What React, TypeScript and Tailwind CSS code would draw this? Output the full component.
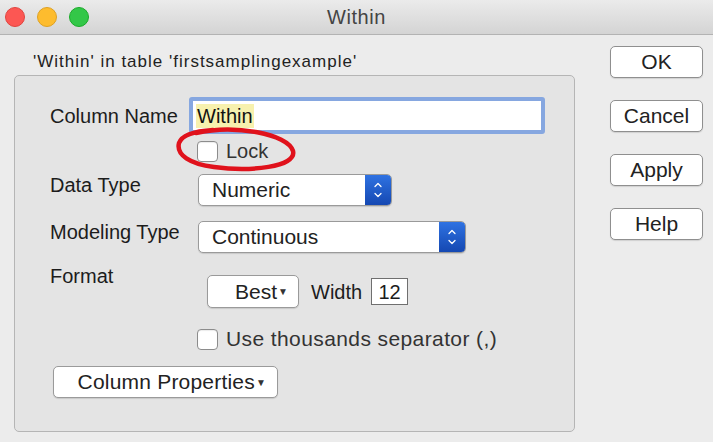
import { ChevronDown, ChevronUp } from "lucide-react";

const font = "font-['Liberation_Sans','Helvetica',sans-serif]";

function Checkbox() {
  return (
    <span className="block h-[21px] w-[21px] shrink-0 rounded-[4px] border border-[#8c8c8c] bg-white shadow-[inset_0_1px_1px_rgba(0,0,0,0.08)]" />
  );
}

type StepperPopupProps = {
  value: string;
  width: string;
};

function StepperPopup({ value, width }: StepperPopupProps) {
  return (
    <div
      className={`flex h-[32px] ${width} overflow-hidden rounded-[5px] border border-[#9a9a9a] bg-white shadow-[0_1px_1px_rgba(0,0,0,0.12)]`}
    >
      <span className="flex flex-1 items-center pl-[13px] text-[21px] text-[#222]">
        {value}
      </span>
      <span className="flex w-[26px] flex-col items-center justify-center bg-gradient-to-b from-[#2f72e2] to-[#1548b2] text-white">
        <ChevronUp size={12} strokeWidth={2.6} className="-mb-[1px]" />
        <ChevronDown size={12} strokeWidth={2.6} className="-mt-[1px]" />
      </span>
    </div>
  );
}

type PushButtonProps = {
  label: string;
};

function PushButton({ label }: PushButtonProps) {
  return (
    <button className="flex h-[32px] w-[93px] items-center justify-center rounded-[5px] border border-[#8f8f8f] bg-white text-[21px] text-[#222] shadow-[0_1px_1px_rgba(0,0,0,0.12)]">
      {label}
    </button>
  );
}

export default function App() {
  return (
    <div className={`relative flex h-[442px] w-[713px] flex-col overflow-hidden bg-[#ececec] ${font}`}>
      {/* title bar */}
      <div className="relative flex h-[35px] shrink-0 items-center justify-center border-b border-[#b3b3b3] bg-gradient-to-b from-[#ebebeb] to-[#d4d4d4]">
        <div className="absolute left-[5px] top-[7px] flex gap-[12px]">
          <span className="h-[20px] w-[20px] rounded-full border border-[#e0443e] bg-[#fc5753]" />
          <span className="h-[20px] w-[20px] rounded-full border border-[#dea123] bg-[#fdbc2e]" />
          <span className="h-[20px] w-[20px] rounded-full border border-[#1aab29] bg-[#33c748]" />
        </div>
        <span className="text-[20px] tracking-[0.6px] text-[#444]">Within</span>
      </div>

      <div className="flex flex-1">
        {/* left side */}
        <div className="flex flex-col pl-[14px]">
          <p className="mt-[16px] pl-[19px] text-[17px] leading-[22px] tracking-[1px] text-[#222]">
            'Within' in table 'firstsamplingexample'
          </p>

          <div className="mt-[2px] flex h-[357px] w-[561px] flex-col rounded-[5px] border border-[#b5b5b5] bg-[#e4e4e4] pl-[35px] pt-[21px] text-[#1c1c1c]">
            {/* Column name */}
            <div className="flex h-[37px] items-center">
              <span className="w-[139px] text-[20px]">Column Name</span>
              <div className="flex h-[37px] w-[356px] items-center rounded-[3px] border-[4px] border-[#86a7e0] bg-white pl-[3px]">
                <span className="bg-[#f7f1ae] px-[1px] text-[20px] leading-[24px] text-[#111]">
                  Within
                </span>
              </div>
            </div>

            {/* Lock */}
            <div className="mt-[6px] flex h-[22px] items-center pl-[147px]">
              <Checkbox />
              <span className="ml-[8px] text-[20px] text-[#333]">Lock</span>
            </div>

            {/* Data type */}
            <div className="mt-[12px] flex items-start">
              <span className="w-[148px] text-[20px] leading-[23px]">Data Type</span>
              <StepperPopup value="Numeric" width="w-[194px]" />
            </div>

            {/* Modeling type */}
            <div className="mt-[15px] flex items-start">
              <span className="w-[148px] text-[20px] leading-[23px]">Modeling Type</span>
              <StepperPopup value="Continuous" width="w-[268px]" />
            </div>

            {/* Format */}
            <div className="mt-[12px] flex items-start">
              <span className="w-[157px] text-[20px] leading-[23px]">Format</span>
              <div className="mt-[10px] flex items-center">
                <div className="flex h-[33px] w-[92px] items-center justify-end rounded-[5px] border border-[#9a9a9a] bg-white pr-[10px] text-[21px] text-[#222] shadow-[0_1px_1px_rgba(0,0,0,0.12)]">
                  Best<span className="ml-[1px] text-[10px] text-[#333]">▼</span>
                </div>
                <span className="ml-[12px] text-[20px]">Width</span>
                <div className="ml-[9px] flex h-[27px] w-[37px] items-center justify-center border border-[#6f6f6f] bg-white text-[20px]">
                  12
                </div>
              </div>
            </div>

            {/* thousands */}
            <div className="mt-[20px] flex h-[22px] items-center pl-[147px]">
              <Checkbox />
              <span className="ml-[8px] text-[21px] tracking-[0.4px] text-[#333]">
                Use thousands separator (,)
              </span>
            </div>

            {/* column properties */}
            <div className="mt-[16px] flex">
              <div className="ml-[3px] flex h-[32px] w-[225px] items-center justify-end rounded-[5px] border border-[#9a9a9a] bg-white pr-[11px] text-[21px] tracking-[0.2px] text-[#222] shadow-[0_1px_1px_rgba(0,0,0,0.12)]">
                Column Properties<span className="ml-[1px] text-[10px] text-[#333]">▼</span>
              </div>
            </div>
          </div>
        </div>

        {/* right buttons */}
        <div className="ml-[35px] mt-[11px] flex flex-col gap-[22px]">
          <PushButton label="OK" />
          <PushButton label="Cancel" />
          <PushButton label="Apply" />
          <PushButton label="Help" />
        </div>
      </div>

      {/* hand-drawn red annotation */}
      <svg
        className="pointer-events-none absolute left-0 top-0"
        width="713"
        height="442"
        viewBox="0 0 713 442"
      >
        <path
          d="M 196 133 C 235 124, 288 134, 293 151 C 297 167, 250 172, 214 167 C 190 164, 176 155, 179 143 C 182 135, 196 131, 213 130"
          fill="none"
          stroke="#e0121c"
          strokeWidth="4.5"
          strokeLinecap="round"
        />
      </svg>
    </div>
  );
}
